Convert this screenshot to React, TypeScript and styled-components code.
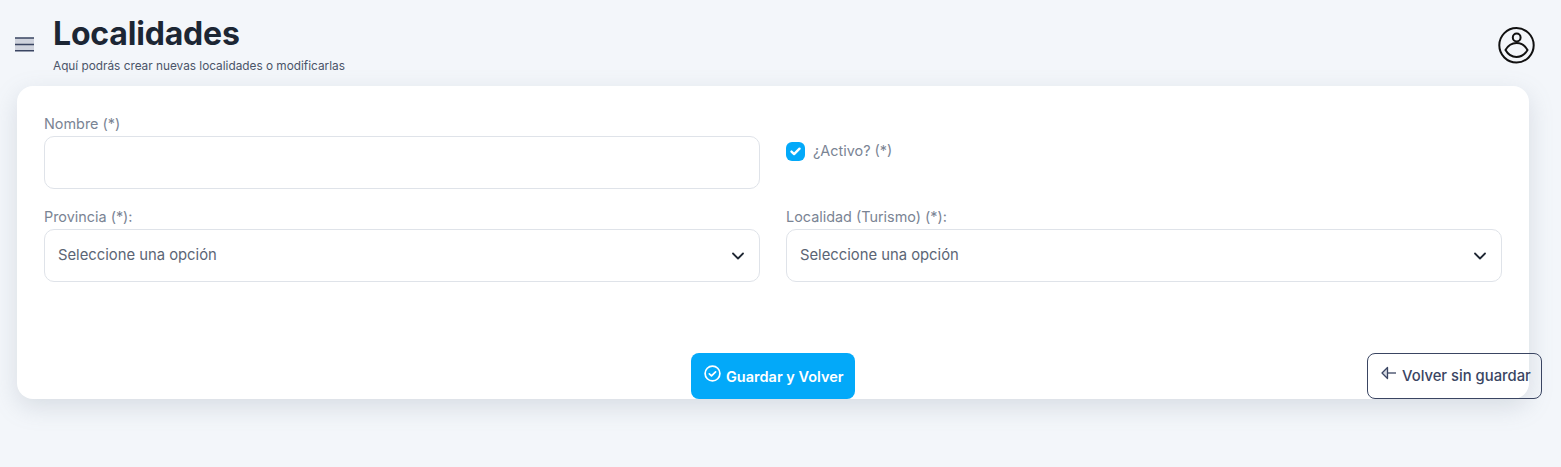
import React from "react";
import styled, { createGlobalStyle } from "styled-components";

const Global = createGlobalStyle`
  html, body { margin: 0; padding: 0; background: #f3f6fa; }
  body { font-family: "Inter", "Liberation Sans", sans-serif; height: 467px; overflow: hidden; }
  * { box-sizing: border-box; }
`;

const Page = styled.div`
  width: 1561px;
  height: 467px;
  padding: 0 0 0 17px;
`;

const Header = styled.header`
  display: flex;
  height: 86px;
  margin-left: -2px;
`;

const MenuButton = styled.button`
  width: 19px;
  height: 15px;
  padding: 0;
  margin-top: 37px;
  border: 0;
  background: none;
  display: block;
  svg { display: block; }
`;

const TitleBlock = styled.div`
  margin-left: 19px;
  flex: 1;
`;

const Title = styled.h1`
  margin: 14px 0 0;
  font-size: 32px;
  line-height: 40px;
  font-weight: 700;
  letter-spacing: -0.18px;
  color: #1c2634;
`;

const Subtitle = styled.p`
  margin: 4px 0 0;
  font-size: 11.8px;
  line-height: 16px;
  color: #4a5468;
`;

const Avatar = styled.div`
  margin: 27px 26px 0 0;
  width: 37px;
  height: 37px;
  svg { display: block; }
`;

const Card = styled.main`
  width: 1512px;
  height: 313px;
  padding: 27px 27px 0;
  border-radius: 16px;
  background: #fff;
  box-shadow: 0 8px 24px rgba(120, 130, 150, 0.22);
`;

const FormGrid = styled.div`
  display: grid;
  grid-template-columns: 716px 716px;
  column-gap: 26px;
  row-gap: 17px;
`;

const Field = styled.div`
  display: flex;
  flex-direction: column;
`;

const Label = styled.label`
  font-size: 14.4px;
  line-height: 21px;
  padding-bottom: 2px;
  color: #7a8494;
`;

const TextBox = styled.input`
  width: 100%;
  height: 53px;
  border: 1px solid #dfe3e9;
  border-radius: 10px;
  background: #fff;
  outline: none;
`;

const SelectBox = styled.div`
  height: 53px;
  padding: 0 14px 2px 13px;
  border: 1px solid #dfe3e9;
  border-radius: 10px;
  display: flex;
  align-items: center;
  justify-content: space-between;
  font-size: 14.8px;
  color: #5b6575;
  svg { display: block; margin-top: 2px; }
`;

const CheckRow = styled.div`
  display: flex;
  align-items: flex-start;
  gap: 8px;
  padding-top: 26px;
`;

const CheckBox = styled.span`
  width: 19px;
  height: 19px;
  margin-top: 3px;
  border-radius: 6px;
  background: #03a9f9;
  display: flex;
  align-items: center;
  justify-content: center;
`;

const CheckLabel = styled.span`
  font-size: 14.4px;
  line-height: 23px;
  color: #7a8494;
`;

const Actions = styled.div`
  display: grid;
  grid-template-columns: 1fr auto 1fr;
  align-items: end;
  margin-top: 71px;
`;

const baseButton = `
  height: 46px;
  border-radius: 8px;
  display: inline-flex;
  align-items: center;
  padding-bottom: 1px;
  font-family: inherit;
  white-space: nowrap;
`;

const PrimaryButton = styled.button`
  ${baseButton}
  grid-column: 2;
  width: 164px;
  padding-left: 13px;
  padding-right: 0;
  gap: 5px;
  border: 0;
  background: #03a9f9;
  color: #fff;
  font-size: 14.5px;
  font-weight: 600;
  svg { display: block; margin-top: -5px; }
`;

const OutlineButton = styled.button`
  ${baseButton}
  grid-column: 3;
  justify-self: end;
  width: 175px;
  margin-right: -40px;
  padding-left: 13px;
  padding-right: 0;
  gap: 5px;
  border: 1px solid #3a4562;
  background: transparent;
  color: #3a4562;
  font-size: 14.8px;
  font-weight: 500;
  svg { display: block; margin-top: -6px; }
`;

const Chevron = () => (
  <svg width="14" height="14" viewBox="0 0 14 14" fill="none" stroke="#1f2733" strokeWidth="1.8" strokeLinecap="round" strokeLinejoin="round">
    <path d="M2 4.5l5 5 5-5" />
  </svg>
);

export default function App() {
  return (
    <>
      <Global />
      <Page>
        <Header>
          <MenuButton aria-label="Menú">
            <svg width="19" height="15" viewBox="0 0 19 15" fill="none">
              <path d="M0 1h19v12.8H0z" fill="#cfd3dd" />
              <path d="M0 1h19M0 7.4h19M0 13.8h19" stroke="#3a4562" strokeWidth="1.5" />
            </svg>
          </MenuButton>
          <TitleBlock>
            <Title>Localidades</Title>
            <Subtitle>Aquí podrás crear nuevas localidades o modificarlas</Subtitle>
          </TitleBlock>
          <Avatar>
            <svg width="37" height="37" viewBox="0 0 37 37" fill="none" stroke="#111" strokeWidth="2">
              <circle cx="18.5" cy="18.3" r="17.2" />
              <circle cx="18.7" cy="10.5" r="3.9" />
              <path d="M7.5 23c2.6-4.6 6.6-7 11-7s8.4 2.4 11 7c-2.6 4.6-6.6 7-11 7s-8.4-2.4-11-7z" />
            </svg>
          </Avatar>
        </Header>
        <Card>
          <FormGrid>
            <Field>
              <Label>Nombre (*)</Label>
              <TextBox type="text" />
            </Field>
            <CheckRow>
              <CheckBox>
                <svg width="11" height="9" viewBox="0 0 11 9" fill="none" stroke="#fff" strokeWidth="2.4" strokeLinecap="round" strokeLinejoin="round">
                  <path d="M1.5 4.6l2.6 2.5 5.4-5.4" />
                </svg>
              </CheckBox>
              <CheckLabel>¿Activo? (*)</CheckLabel>
            </CheckRow>
            <Field>
              <Label>Provincia (*):</Label>
              <SelectBox>Seleccione una opción<Chevron /></SelectBox>
            </Field>
            <Field>
              <Label>Localidad (Turismo) (*):</Label>
              <SelectBox>Seleccione una opción<Chevron /></SelectBox>
            </Field>
          </FormGrid>
          <Actions>
            <PrimaryButton>
              <svg width="17" height="17" viewBox="0 0 17 17" fill="none" stroke="#fff" strokeWidth="1.7" strokeLinecap="round" strokeLinejoin="round">
                <circle cx="8.5" cy="8.5" r="7.4" />
                <path d="M5.3 8.8l2.2 2.1 4.1-4.1" />
              </svg>
              Guardar y Volver
            </PrimaryButton>
            <OutlineButton>
              <svg width="16" height="14" viewBox="0 0 16 14" fill="none" stroke="#3a4562" strokeWidth="1.3" strokeLinejoin="round">
                <path d="M15 7H6.5" />
                <path d="M6.5 1.5L1 7l5.5 5.5z" fill="#d5d9e2" />
              </svg>
              Volver sin guardar
            </OutlineButton>
          </Actions>
        </Card>
      </Page>
    </>
  );
}
